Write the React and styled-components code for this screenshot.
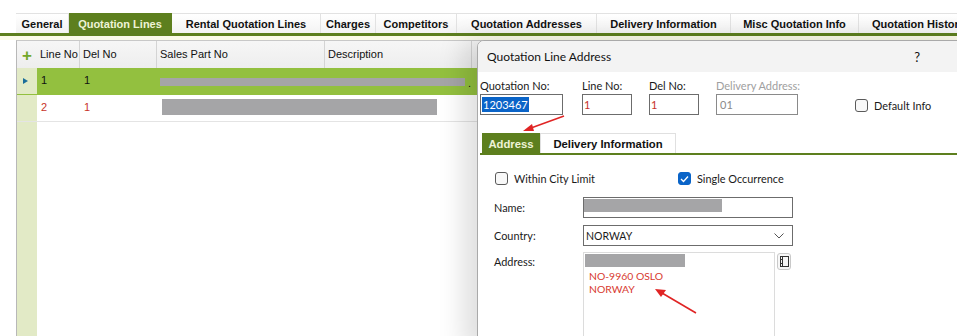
import React from 'react'
import styled, { createGlobalStyle } from 'styled-components'

const GlobalStyle = createGlobalStyle`
  html, body { margin: 0; padding: 0; background: #fff; }
  body { width: 957px; height: 336px; overflow: hidden; font-family: "Liberation Sans", Arial, sans-serif; }
`

const mainTabs = [
  { label: 'General', w: 53 },
  { label: 'Quotation Lines', w: 103, active: true },
  { label: 'Rental Quotation Lines', w: 149 },
  { label: 'Charges', w: 55 },
  { label: 'Competitors', w: 81 },
  { label: 'Quotation Addresses', w: 140 },
  { label: 'Delivery Information', w: 134 },
  { label: 'Misc Quotation Info', w: 128 },
  { label: 'Quotation History', w: 120 },
]

const columns = [
  { label: 'Line No', w: 43 },
  { label: 'Del No', w: 77 },
  { label: 'Sales Part No', w: 168 },
  { label: 'Description', w: 147 },
]

const rows = [
  { line: '1', del: '1', selected: true, bar: { left: 3, width: 305, top: 10, height: 8 } },
  { line: '2', del: '1', bar: { left: 5, width: 275, top: 4, height: 16 } },
]

const App = () => {
  return (
    <Page>
      <GlobalStyle />
      <TabBar>
        {mainTabs.map(t => (
          <MainTab key={t.label} $w={t.w} $active={t.active}>{t.label}</MainTab>
        ))}
      </TabBar>
      <Band />
      <Grid>
        <HeaderRow>
          <Indicator $head><Plus>+</Plus></Indicator>
          {columns.map(c => <HeadCell key={c.label} $w={c.w}>{c.label}</HeadCell>)}
          <HeadCell $w={20} />
        </HeaderRow>
        {rows.map((r, i) => (
          <Row key={i} $selected={r.selected}>
            <Indicator>{r.selected ? <Pointer /> : null}</Indicator>
            <Cell $w={43} $red={!r.selected}>{r.line}</Cell>
            <Cell $w={77} $red={!r.selected}>{r.del}</Cell>
            <WideCell>
              <Redacted style={{ marginLeft: r.bar.left, width: r.bar.width, marginTop: r.bar.top, height: r.bar.height }} />
              {r.selected ? <Dot>.</Dot> : null}
            </WideCell>
          </Row>
        ))}
        <EmptyArea>
          <Indicator $fill />
          <div />
        </EmptyArea>
      </Grid>

      <Dialog>
        <TitleBar>
          <span>Quotation Line Address</span>
          <Help>?</Help>
        </TitleBar>
        <DialogBody>
          <TopFields>
            <Field $w={102}>
              <Label>Quotation No:</Label>
              <Input $w={83}><Selected>1203467</Selected></Input>
            </Field>
            <Field $w={67}>
              <Label>Line No:</Label>
              <Input $w={50} $red>1</Input>
            </Field>
            <Field $w={67}>
              <Label>Del No:</Label>
              <Input $w={50} $red>1</Input>
            </Field>
            <Field $w={139}>
              <Label $muted>Delivery Address:</Label>
              <Input $w={82} $muted>01</Input>
            </Field>
            <CheckLabel $top={20}>
              <Box />
              Default Info
            </CheckLabel>
          </TopFields>

          <SubTabs>
            <SubTab $active $w={58}>Address</SubTab>
            <SubTab $w={136}>Delivery Information</SubTab>
          </SubTabs>

          <Panel>
            <Checks>
              <CheckLabel $w={183}>
                <Box />
                Within City Limit
              </CheckLabel>
              <CheckLabel>
                <Box $checked>
                  <svg width="9" height="8" viewBox="0 0 9 8">
                    <polyline points="1,4 3.5,6.5 8,1.5" fill="none" stroke="#fff" strokeWidth="1.3" />
                  </svg>
                </Box>
                Single Occurrence
              </CheckLabel>
            </Checks>
            <Form>
              <FormLabel>Name:</FormLabel>
              <TextBox><Redacted style={{ width: 138, height: 13, marginTop: 1 }} /></TextBox>
              <FormLabel>Country:</FormLabel>
              <TextBox $select>
                <span>NORWAY</span>
                <svg width="10" height="6" viewBox="0 0 10 6">
                  <polyline points="0.5,0.5 5,5 9.5,0.5" fill="none" stroke="#555" strokeWidth="1" />
                </svg>
              </TextBox>
              <FormLabel $top={3} $shift>Address:</FormLabel>
              <AddressWrap>
                <AddressBox>
                  <Redacted style={{ width: 100, height: 13 }} />
                  <AddrLines>
                    <div>NO-9960 OSLO</div>
                    <div>NORWAY</div>
                  </AddrLines>
                </AddressBox>
                <SmallButton>
                  <svg width="9" height="11" viewBox="0 0 9 11">
                    <rect x="0.5" y="0.5" width="8" height="10" fill="none" stroke="#333" />
                    <line x1="2.5" y1="1" x2="2.5" y2="10" stroke="#333" />
                    <line x1="0" y1="3.5" x2="3" y2="3.5" stroke="#333" />
                    <line x1="0" y1="7.5" x2="3" y2="7.5" stroke="#333" />
                  </svg>
                </SmallButton>
              </AddressWrap>
            </Form>
          </Panel>
        </DialogBody>
      </Dialog>

      <Annotations width="957" height="336" viewBox="0 0 957 336">
        <line x1="564" y1="116" x2="531" y2="128" stroke="#e02424" strokeWidth="1.6" />
        <polygon points="523,131 532,124 534,131" fill="#e02424" />
        <line x1="696" y1="313" x2="662" y2="293" stroke="#e02424" strokeWidth="1.6" />
        <polygon points="655,289 666,290 661,297" fill="#e02424" />
      </Annotations>
    </Page>
  )
}

export default App

const Page = styled.div`
  position: relative;
  width: 957px;
  height: 336px;
  overflow: hidden;
  background: #fff;
`

const TabBar = styled.div`
  display: flex;
  padding: 13px 0 0 16px;
  border-bottom: 3px solid #5d7f1e;
  white-space: nowrap;
`

const MainTab = styled.div`
  flex: 0 0 ${p => p.$w}px;
  height: 20px;
  box-sizing: border-box;
  display: flex;
  align-items: center;
  justify-content: center;
  font-size: 11px;
  font-weight: bold;
  color: ${p => p.$active ? '#eef3d6' : '#111'};
  background: ${p => p.$active ? '#5d7f1e' : 'linear-gradient(#ffffff, #f3f3f3)'};
  border: 1px solid ${p => p.$active ? '#5d7f1e' : '#e2e2e2'};
  border-bottom: none;
  border-left: none;
`

const Band = styled.div`
  height: 4px;
  background: #fbfbe9;
`

const Grid = styled.div`
  margin-left: 16px;
  border-left: 1px solid #b8b8b8;
  border-top: 1px solid #c8c8c8;
  font-size: 11px;
  color: #111;
  height: 300px;
  display: flex;
  flex-direction: column;
`

const HeaderRow = styled.div`
  display: flex;
  height: 27px;
  background: linear-gradient(#f6f6f6, #eeeeee);
`

const Indicator = styled.div`
  flex: 0 0 20px;
  display: flex;
  align-items: center;
  justify-content: center;
  background: ${p => p.$head ? 'transparent' : '#e2eac6'};
  ${p => p.$fill && 'align-self: stretch;'}
`

const Plus = styled.span`
  color: #72a82a;
  font-size: 17px;
  font-weight: bold;
  line-height: 1;
  margin-top: 2px;
`

const HeadCell = styled.div`
  flex: 0 0 ${p => p.$w}px;
  box-sizing: border-box;
  padding: 0 0 2px 3px;
  display: flex;
  align-items: center;
  border-right: 1px solid #d4d4d4;
`

const Row = styled.div`
  display: flex;
  height: 27px;
  background: ${p => p.$selected ? '#93c03f' : '#fff'};
  border-bottom: 1px solid ${p => p.$selected ? '#93c03f' : '#e4e4e4'};
  box-sizing: border-box;
`

const Pointer = styled.span`
  width: 0;
  height: 0;
  border-top: 3.5px solid transparent;
  border-bottom: 3.5px solid transparent;
  border-left: 5px solid #1b6d9a;
  margin-left: -3px;
`

const Cell = styled.div`
  flex: 0 0 ${p => p.$w}px;
  box-sizing: border-box;
  padding: 0 0 2px 4px;
  display: flex;
  align-items: center;
  color: ${p => p.$red ? '#c8332a' : '#111'};
`

const WideCell = styled.div`
  flex: 1;
  display: flex;
  align-items: flex-start;
`

const Redacted = styled.div`
  background: #a5a5a7;
  flex: none;
`

const Dot = styled.span`
  margin: 10px 0 0 3px;
  line-height: 1;
`

const EmptyArea = styled.div`
  flex: 1;
  display: flex;
`

const Dialog = styled.div`
  position: absolute;
  left: 477px;
  top: 40px;
  width: 500px;
  height: 310px;
  box-sizing: border-box;
  background: #fff;
  border: 1px solid #a9a9a9;
  border-top-left-radius: 7px;
  box-shadow: -14px 0 26px rgba(0, 0, 0, 0.13);
  font-family: Lato, "Noto Sans", sans-serif;
  font-size: 10.9px;
  color: #1a1a1a;
  overflow: hidden;
`

const TitleBar = styled.div`
  height: 31px;
  background: #f3f3f3;
  display: flex;
  align-items: center;
  justify-content: space-between;
  padding: 0 56px 0 9px;
  font-size: 12px;
  color: #111;
`

const Help = styled.span`
  font-size: 13px;
`

const DialogBody = styled.div`
  padding: 7px 0 0 2px;
`

const TopFields = styled.div`
  display: flex;
  align-items: flex-start;
`

const Field = styled.div`
  flex: 0 0 ${p => p.$w}px;
  display: flex;
  flex-direction: column;
  gap: 1px;
`

const Label = styled.div`
  height: 14px;
  line-height: 14px;
  font-size: 11px;
  color: ${p => p.$muted ? '#a0a0a0' : '#1a1a1a'};
`

const Input = styled.div`
  width: ${p => p.$w}px;
  height: 21px;
  box-sizing: border-box;
  border: 1px solid ${p => p.$muted ? '#8a8a8a' : '#6c6c6c'};
  padding: 2px 1px;
  display: flex;
  align-items: center;
  font-size: 11px;
  color: ${p => p.$red ? '#c8332a' : p.$muted ? '#8a8a8a' : '#1a1a1a'};
  padding-left: ${p => p.$muted ? 3 : 1}px;
`

const Selected = styled.span`
  background: #0a64c8;
  color: #fff;
  height: 15px;
  line-height: 15px;
  padding: 0 1px;
`

const CheckLabel = styled.label`
  display: flex;
  align-items: center;
  gap: 6px;
  margin-top: ${p => p.$top || 0}px;
  ${p => p.$w && `flex: 0 0 ${p.$w}px;`}
  font-size: 10.9px;
  color: #1a1a1a;
`

const Box = styled.span`
  width: 13px;
  height: 13px;
  box-sizing: border-box;
  border-radius: 3px;
  border: 1px solid ${p => p.$checked ? '#0a64c8' : '#5a5a5a'};
  background: ${p => p.$checked ? '#0a64c8' : '#f8f8f8'};
  display: flex;
  align-items: center;
  justify-content: center;
`

const SubTabs = styled.div`
  display: flex;
  margin-top: 18px;
  padding-left: 2px;
  border-bottom: 2px solid #5d7f1e;
`

const SubTab = styled.div`
  flex: 0 0 ${p => p.$w}px;
  height: 20px;
  box-sizing: border-box;
  display: flex;
  align-items: center;
  justify-content: center;
  font-family: "Liberation Sans", Arial, sans-serif;
  font-size: 11.3px;
  font-weight: bold;
  color: ${p => p.$active ? '#eef3d6' : '#111'};
  background: ${p => p.$active ? '#5d7f1e' : '#fff'};
  border: 1px solid ${p => p.$active ? '#5d7f1e' : '#e0e0e0'};
  border-bottom: none;
`

const Panel = styled.div`
  padding: 17px 0 0 14px;
`

const Checks = styled.div`
  display: flex;
  align-items: center;
  padding-left: 1px;
`

const Form = styled.div`
  display: grid;
  grid-template-columns: 89px 210px;
  grid-auto-rows: auto;
  row-gap: 7px;
  margin-top: 12px;
`

const FormLabel = styled.div`
  display: flex;
  align-items: ${p => p.$top ? 'flex-start' : 'center'};
  padding-top: ${p => p.$top || 0}px;
  ${p => p.$shift && 'margin-top: -1px;'}
`

const TextBox = styled.div`
  height: 21px;
  box-sizing: border-box;
  border: 1px solid #6c6c6c;
  display: flex;
  align-items: ${p => p.$select ? 'center' : 'flex-start'};
  justify-content: space-between;
  padding: ${p => p.$select ? '0 8px 0 2px' : '0'};
  font-size: 10.5px;
`

const AddressWrap = styled.div`
  display: flex;
  align-items: flex-start;
  gap: 2px;
  margin-top: -1px;
`

const AddressBox = styled.div`
  width: 192px;
  height: 120px;
  box-sizing: border-box;
  border: 1px solid #dcdcdc;
  padding: 1px 0 0 1px;
  display: flex;
  flex-direction: column;
`

const AddrLines = styled.div`
  color: #d83a30;
  padding-left: 4px;
  margin-top: 3px;
  line-height: 13px;
  font-size: 10.4px;
`

const SmallButton = styled.div`
  width: 14px;
  height: 17px;
  box-sizing: border-box;
  margin-top: 1px;
  border: 1px solid #c9c9c9;
  border-radius: 3px;
  background: #f7f7f7;
  display: flex;
  align-items: center;
  justify-content: center;
`

const Annotations = styled.svg`
  position: absolute;
  left: 0;
  top: 0;
  pointer-events: none;
`
